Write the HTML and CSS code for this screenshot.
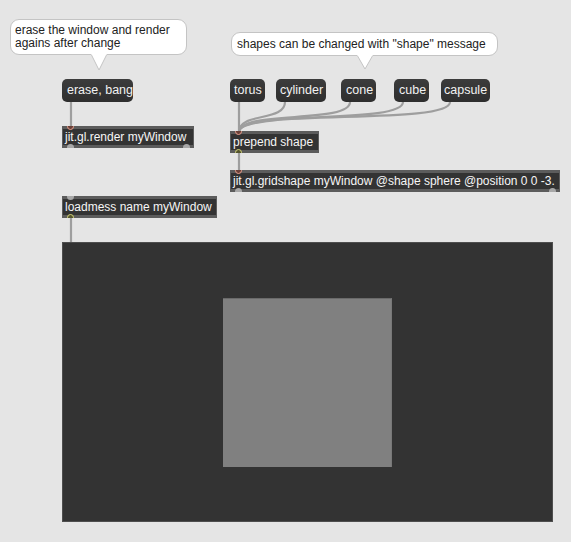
FILE: index.html
```html
<!DOCTYPE html>
<html>
<head>
<meta charset="utf-8">
<link rel="stylesheet" href="styles.css">
</head>
<body>
<div class="patcher">
  <svg class="cords" width="571" height="542" viewBox="0 0 571 542">
    <g fill="none" stroke="#9e9e9e" stroke-width="2.2" stroke-linecap="round">
      <path d="M71 101 L71 127"/>
      <path d="M239 102 L239 132"/>
      <path d="M285 102 C285 122, 239 112, 239 132"/>
      <path d="M350 102 C350 124, 239 110, 239 132"/>
      <path d="M403 102 C403 125, 239 109, 239 132"/>
      <path d="M450 102 C450 126, 239 108, 239 132"/>
      <path d="M239 153 L239 171"/>
      <path d="M71 218 L71 242"/>
    </g>
  </svg>

  <div class="comment c1">
    <span>erase the window and render<br>agains after change</span>
    <svg class="tail t1" width="18" height="18" viewBox="0 0 18 18"><path d="M1 0 L9 16 L17 0" fill="#fff" stroke="#c4c4c4" stroke-width="1"/><path d="M1.5 0 L16.5 0" stroke="#fff" stroke-width="2"/></svg>
  </div>

  <div class="comment c2">
    <span>shapes can be changed with "shape" message</span>
    <svg class="tail t2" width="18" height="16" viewBox="0 0 18 16"><path d="M1 0 L9 14 L17 0" fill="#fff" stroke="#c4c4c4" stroke-width="1"/><path d="M1.5 0 L16.5 0" stroke="#fff" stroke-width="2"/></svg>
  </div>

  <div class="msg m-erase">erase, bang</div>
  <div class="msg m-torus">torus</div>
  <div class="msg m-cyl">cylinder</div>
  <div class="msg m-cone">cone</div>
  <div class="msg m-cube">cube</div>
  <div class="msg m-caps">capsule</div>

  <div class="obj o-render">jit.gl.render myWindow
    <i class="port in hot"></i><i class="port out idle"></i><i class="port out idle r"></i>
  </div>
  <div class="obj o-prepend">prepend shape
    <i class="port in hot"></i><i class="port out lit"></i>
  </div>
  <div class="obj o-grid">jit.gl.gridshape myWindow @shape sphere @position 0 0 -3.
    <i class="port in hot"></i><i class="port out idle"></i><i class="port out idle r"></i>
  </div>
  <div class="obj o-load">loadmess name myWindow
    <i class="port in idle"></i><i class="port out lit"></i>
  </div>

  <div class="pwindow">
    <div class="shape"></div>
  </div>
</div>
</body>
</html>
```

FILE: styles.css
```css
html, body {
  margin: 0;
  padding: 0;
  background: #e5e5e5;
}
.patcher {
  position: relative;
  width: 571px;
  height: 542px;
  overflow: hidden;
  font-family: "Liberation Sans", Arial, sans-serif;
  font-size: 12px;
  background: #e5e5e5;
}
.cords {
  position: absolute;
  left: 0;
  top: 0;
}

/* comment bubbles */
.comment {
  position: absolute;
  box-sizing: border-box;
  background: #fff;
  border: 1px solid #c4c4c4;
  border-radius: 9px;
  color: #222;
  line-height: 13px;
  padding: 4px 4px 0 4px;
}
.comment span { position: relative; z-index: 2; }
.c1 { left: 10px; top: 19px; width: 177px; height: 36px; }
.c2 { left: 231px; top: 32px; width: 267px; height: 24px; padding-top: 5px; padding-left: 5px; }
.tail { position: absolute; }
.t1 { left: 79px; top: 34px; }
.t2 { left: 124px; top: 22px; }

/* message boxes */
.msg {
  position: absolute;
  box-sizing: border-box;
  height: 23px;
  top: 79px;
  line-height: 22px;
  padding: 0 5px;
  color: #f2f2f2;
  background: linear-gradient(#3c3c3c, #2e2e2e);
  border-radius: 5px;
  white-space: nowrap;
  z-index: 3;
  font-size: 12.5px;
}
.m-erase { left: 62px; width: 71px; }
.m-torus { left: 230px; width: 35px; padding: 0 4px; }
.m-cyl { left: 276px; width: 50px; padding: 0 4px; }
.m-cone { left: 341px; width: 35px; padding: 0 5px; }
.m-cube { left: 394px; width: 35px; padding: 0 5px; }
.m-caps { left: 441px; width: 49px; padding: 0 3px; }

/* object boxes */
.obj {
  position: absolute;
  box-sizing: border-box;
  height: 22px;
  line-height: 16px;
  padding: 3px 3px;
  color: #f6f6f6;
  background: linear-gradient(#5c5c5c 0, #5c5c5c 3px, #333 3px, #333 19px, #5c5c5c 19px);
  box-shadow: inset 1px 0 0 #5c5c5c, inset -1px 0 0 #5c5c5c;
  white-space: nowrap;
  z-index: 3;
  font-size: 12px;
  overflow: hidden;
}
.o-render { left: 62px; top: 126px; width: 132px; }
.o-prepend { left: 230px; top: 131px; width: 89px; }
.o-grid { left: 230px; top: 170px; width: 330px; }
.o-load { left: 62px; top: 196px; width: 155px; }

.port {
  position: absolute;
  width: 7px;
  height: 7px;
  border-radius: 50%;
  box-sizing: border-box;
  left: 5px;
}
.port.in { top: -3px; }
.port.out { bottom: -3px; }
.port.r { left: auto; right: 4px; }
.port.hot { border: 1.5px solid #e8a08e; background: #6a4038; }
.port.lit { border: 1.5px solid #d6d67a; background: #55552e; }
.port.idle { background: #a8a8a8; }

/* jit.pwindow */
.pwindow {
  position: absolute;
  left: 62px;
  top: 242px;
  width: 491px;
  height: 280px;
  box-sizing: border-box;
  background: #333;
  border: 1px solid #4e4e4e;
  display: flex;
  align-items: center;
  justify-content: center;
  z-index: 3;
}
.shape {
  width: 169px;
  height: 169px;
  background: #808080;
  box-sizing: border-box;
  border-top: 1px solid #6a6a6a;
  border-right: 1px solid #787878;
}
```
